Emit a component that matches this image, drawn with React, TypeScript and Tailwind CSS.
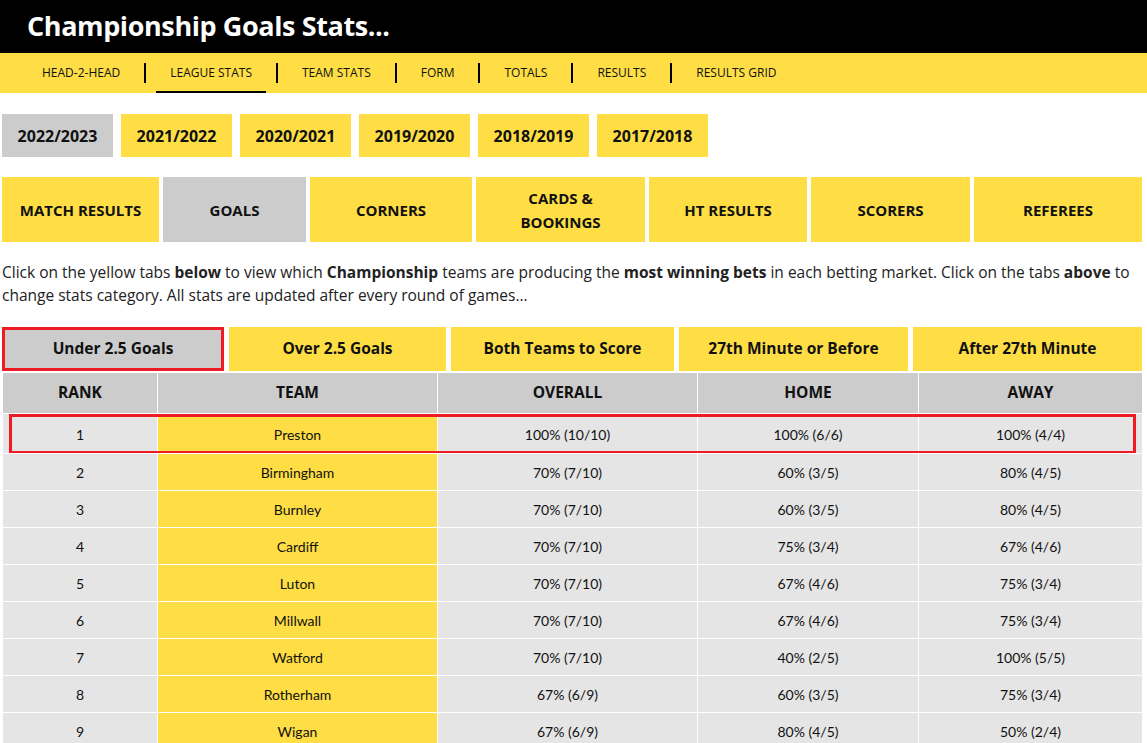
const seasons = ["2022/2023", "2021/2022", "2020/2021", "2019/2020", "2018/2019", "2017/2018"];

const navItems = ["HEAD-2-HEAD", "LEAGUE STATS", "TEAM STATS", "FORM", "TOTALS", "RESULTS", "RESULTS GRID"];

const categories = [
    { label: "MATCH RESULTS", w: "w-[157px]" },
    { label: "GOALS", w: "w-[143px]", active: true },
    { label: "CORNERS", w: "w-[162px]" },
    { label: "CARDS &|BOOKINGS", w: "w-[169px]" },
    { label: "HT RESULTS", w: "w-[158px]" },
    { label: "SCORERS", w: "w-[159px]" },
    { label: "REFEREES", w: "flex-1" },
];

const markets = [
    { label: "Under 2.5 Goals", w: "w-[222px]", active: true },
    { label: "Over 2.5 Goals", w: "w-[217px]" },
    { label: "Both Teams to Score", w: "w-[223px]" },
    { label: "27th Minute or Before", w: "w-[229px]" },
    { label: "After 27th Minute", w: "flex-1" },
];

const rows = [
    ["1", "Preston", "100% (10/10)", "100% (6/6)", "100% (4/4)"],
    ["2", "Birmingham", "70% (7/10)", "60% (3/5)", "80% (4/5)"],
    ["3", "Burnley", "70% (7/10)", "60% (3/5)", "80% (4/5)"],
    ["4", "Cardiff", "70% (7/10)", "75% (3/4)", "67% (4/6)"],
    ["5", "Luton", "70% (7/10)", "67% (4/6)", "75% (3/4)"],
    ["6", "Millwall", "70% (7/10)", "67% (4/6)", "75% (3/4)"],
    ["7", "Watford", "70% (7/10)", "40% (2/5)", "100% (5/5)"],
    ["8", "Rotherham", "67% (6/9)", "60% (3/5)", "75% (3/4)"],
    ["9", "Wigan", "67% (6/9)", "80% (4/5)", "50% (2/4)"],
];

const cols = ["w-[154px]", "w-[280px]", "w-[260px]", "w-[221px]", "flex-1"];

export default function App() {
    return (
        <div className="w-[1147px] h-[743px] overflow-hidden bg-white font-['Open_Sans',sans-serif] text-[#111]">
            <div className="h-[53px] bg-black flex items-center pl-[27px]">
                <h1 className="text-white text-[27px] font-bold tracking-[-0.4px]">Championship Goals Stats...</h1>
            </div>

            <div className="h-[40px] bg-[#fede44] flex items-center pl-[18px] text-[12px]">
                {navItems.map((item, i) => (
                    <div key={item} className="flex items-center h-full">
                        {i > 0 && <div className="w-[2px] h-[20px] bg-black" />}
                        <div className="relative h-full flex items-center px-[24px]">
                            {item}
                            {item === "LEAGUE STATS" && (
                                <div className="absolute left-[10px] right-[10px] bottom-0 h-[2px] bg-black" />
                            )}
                        </div>
                    </div>
                ))}
            </div>

            <div className="flex gap-[8px] pl-[2px] mt-[21px]">
                {seasons.map((s, i) => (
                    <div
                        key={s}
                        className={`w-[111px] h-[43px] flex items-center justify-center font-bold text-[16px] ${i === 0 ? "bg-[#cccccc]" : "bg-[#fede44]"}`}
                    >
                        {s}
                    </div>
                ))}
            </div>

            <div className="flex gap-[4px] px-[2px] mt-[20px] w-[1144px]">
                {categories.map((c) => (
                    <div
                        key={c.label}
                        className={`${c.w} h-[65px] flex flex-col items-center justify-center text-center font-bold text-[15px] leading-[24px] whitespace-nowrap ${c.active ? "bg-[#cccccc]" : "bg-[#fede44]"}`}
                    >
                        {c.label.split("|").map((part) => (
                            <span key={part}>{part}</span>
                        ))}
                    </div>
                ))}
            </div>

            <p className="mt-[19px] px-[2px] text-[15.5px] leading-[23px] text-[#222]">
                Click on the yellow tabs <b>below</b> to view which <b>Championship</b> teams are producing the{" "}
                <b>most winning bets</b> in each betting market. Click on the tabs <b>above</b> to change stats category. All stats are
                updated after every round of games...
            </p>

            <div className="flex gap-[5px] px-[2px] mt-[20px] w-[1144px]">
                {markets.map((m) => (
                    <div
                        key={m.label}
                        className={`${m.w} h-[44px] flex items-center justify-center font-bold text-[15.5px] ${m.active ? "bg-[#cccccc] border-[3px] border-[#ed1c24]" : "bg-[#fede44]"}`}
                    >
                        {m.label}
                    </div>
                ))}
            </div>

            <div className="ml-[3px] mt-[2px] w-[1139px]">
                <div className="flex h-[40px] bg-[#cccccc] font-bold text-[15.5px]">
                    {["RANK", "TEAM", "OVERALL", "HOME", "AWAY"].map((h, i) => (
                        <div key={h} className={`${cols[i]} flex items-center justify-center ${i > 0 ? "border-l border-white" : ""}`}>
                            {h}
                        </div>
                    ))}
                </div>
                {rows.map((r, ri) => (
                    <div
                        key={r[0]}
                        className={`relative flex ${ri === 0 ? "h-[40px]" : "h-[37px]"} border-t border-white bg-[#e5e5e5] text-[14px] font-['Lato',sans-serif]`}
                    >
                        {r.map((cell, i) => (
                            <div
                                key={i}
                                className={`${cols[i]} flex items-center justify-center pt-[1px] ${i > 0 ? "border-l border-white" : ""} ${i === 1 ? "bg-[#fede44]" : ""}`}
                            >
                                {cell}
                            </div>
                        ))}
                        {ri === 0 && (
                            <div className="absolute left-[6px] w-[1127px] top-0 h-[40px] border-[3px] border-[#ed1c24] pointer-events-none" />
                        )}
                    </div>
                ))}
            </div>
        </div>
    );
}
